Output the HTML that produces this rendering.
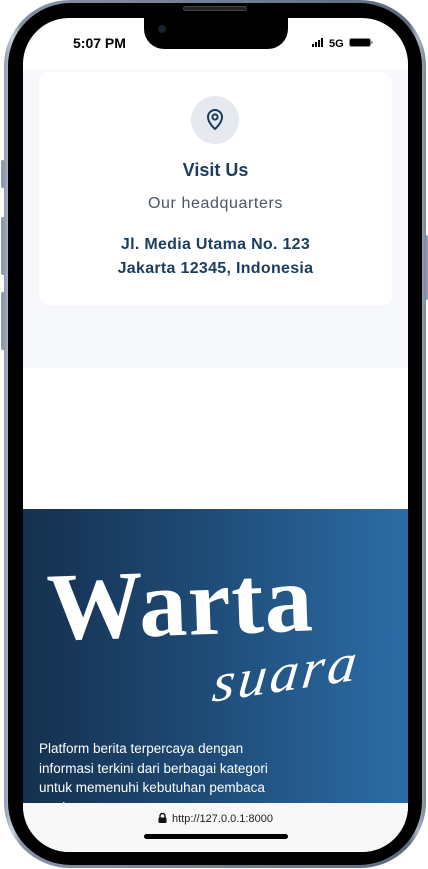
<!DOCTYPE html>
<html><head><meta charset="utf-8"><style>
*{margin:0;padding:0;box-sizing:border-box}
html,body{width:428px;height:869px;background:#fff;overflow:hidden;font-family:"Liberation Sans",sans-serif}
.frame{position:absolute;left:4px;top:0;width:422px;height:868px;border-radius:66px;background:linear-gradient(90deg,#8c98ab,#c9d1dd 2%,#8792a6 4%,#5d6a80 96%,#aab4c4 98%,#7b879b);}
.bez{position:absolute;left:4px;top:3px;right:4px;bottom:3px;border-radius:63px;background:#000}
.btn{position:absolute;left:1px;width:4px;background:#8f9bb0;border-radius:2px}
.screen{position:absolute;left:23px;top:18px;width:385px;height:834px;border-radius:46px;overflow:hidden;background:#fff}
.notch{position:absolute;left:121px;top:0;width:144px;height:31px;background:#000;border-radius:0 0 20px 20px}
.cam{position:absolute;left:14px;top:7px;width:8px;height:8px;border-radius:50%;background:#1a2030}
.spk{position:absolute;left:183px;top:6px;width:64px;height:5px;border-radius:3px;background:#222;border:1px solid #444}
.time{position:absolute;left:50px;top:17px;font-weight:bold;font-size:14px;color:#000}
.gray{position:absolute;left:0;top:52px;width:385px;height:298px;background:#f7f8fb}
.card{position:absolute;left:16px;top:54px;width:353px;height:233px;background:#fff;border-radius:11px}
.ic{position:absolute;left:152px;top:24px;width:48px;height:48px;border-radius:50%;background:#e6eaf0}
.t{position:absolute;left:0;width:353px;text-align:center;color:#1a3c5e}
.blue{position:absolute;left:0;top:491px;width:385px;height:294px;background:linear-gradient(90deg,#15304f,#1e4a74 45%,#2c6ca6)}
.bar{position:absolute;left:0;top:785px;width:385px;height:49px;background:#f8f8f8}
</style></head><body>
<div class="btn" style="top:160px;height:28px"></div>
<div class="btn" style="top:217px;height:58px"></div>
<div class="btn" style="top:292px;height:58px"></div>
<div class="btn" style="left:424px;top:235px;height:65px"></div>
<div class="frame"><div class="bez"></div></div>
<div class="spk"></div>
<div class="screen">
 <div class="notch"><div class="cam"></div></div>
 <div class="time">5:07 PM</div>
 <svg style="position:absolute;left:289px;top:19px" width="64" height="12" viewBox="0 0 64 12">
  <rect x="0" y="7" width="2" height="3" fill="#000"/><rect x="3" y="5" width="2" height="5" fill="#000"/><rect x="6" y="3" width="2" height="7" fill="#000"/><rect x="9" y="1" width="2" height="9" fill="#000"/>
  <text x="17" y="10" font-family="Liberation Sans" font-weight="bold" font-size="11">5G</text>
  <rect x="37.5" y="1.5" width="21" height="8" rx="2" fill="#000" stroke="#888" stroke-width="1"/>
  <rect x="59" y="4" width="1.5" height="3" fill="#888"/>
 </svg>
 <div class="gray"></div>
 <div class="card">
  <div class="ic"><svg width="48" height="48" viewBox="0 0 48 48"><path d="M24 33c0 0-7-6-7-12a7 7 0 0 1 14 0c0 6-7 12-7 12z" fill="none" stroke="#1a3c5e" stroke-width="2" stroke-linejoin="round"/><circle cx="24" cy="21" r="2.6" fill="none" stroke="#1a3c5e" stroke-width="2"/></svg></div>
  <div class="t" style="top:88px;font-size:18px;font-weight:bold">Visit Us</div>
  <div class="t" style="top:123px;font-size:16px;color:#4a5565;letter-spacing:0.6px">Our headquarters</div>
  <div class="t" style="top:161px;font-size:16px;font-weight:bold;line-height:24px;letter-spacing:0.3px">Jl. Media Utama No. 123<br>Jakarta 12345, Indonesia</div>
 </div>
 <div class="blue">
  <div style="position:absolute;left:24px;top:46px;font-family:'Liberation Serif',serif;font-weight:bold;font-size:96px;line-height:1;color:#fff;transform:rotate(-2deg);letter-spacing:1px">Warta</div>
  <div style="position:absolute;left:192px;top:136px;font-family:'Liberation Serif',serif;font-style:italic;font-size:56px;line-height:1;color:#fff;transform:skewX(-15deg) rotate(-9deg);letter-spacing:3px">suara</div>
  <div style="position:absolute;left:16px;top:230px;width:248px;font-size:13.5px;line-height:19.5px;color:#fff">Platform berita terpercaya dengan informasi terkini dari berbagai kategori untuk memenuhi kebutuhan pembaca modern</div>
 </div>
 <div class="bar">
  <div style="position:absolute;left:0;width:385px;top:10px;text-align:center;font-size:11px;color:#222"><svg width="9" height="10" viewBox="0 0 9 10" style="vertical-align:-1px;margin-right:5px"><path d="M2 4.5V3a2.5 2.5 0 0 1 5 0v1.5" fill="none" stroke="#111" stroke-width="1.4"/><rect x="0.5" y="4.5" width="8" height="5.5" rx="1" fill="#111"/></svg>http://127.0.0.1:8000</div>
  <div style="position:absolute;left:121px;top:31px;width:144px;height:5px;border-radius:3px;background:#000"></div>
 </div>
</div>
</body></html>
